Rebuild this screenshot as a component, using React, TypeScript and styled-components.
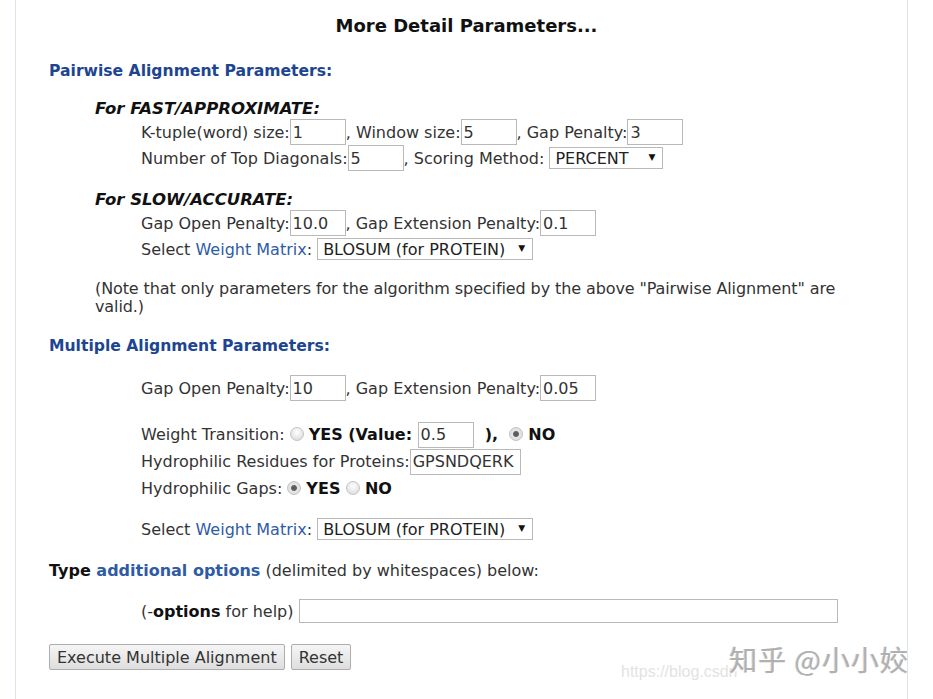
import React from "react";
import styled, { createGlobalStyle } from "styled-components";

const GlobalStyle = createGlobalStyle`
  html, body {
    margin: 0;
    padding: 0;
    background: #ffffff;
  }
  body {
    font-family: "DejaVu Sans", Verdana, sans-serif;
    font-size: 16px;
    color: #333333;
  }
`;

const Frame = styled.div`
  position: relative;
  box-sizing: border-box;
  margin-left: 15px;
  width: 893px;
  height: 699px;
  border-left: 1px solid #dde4ec;
  border-right: 1px solid #dde4ec;
  padding-top: 15px;
  overflow: hidden;
`;

const Title = styled.h2`
  margin: 0;
  font-size: 18px;
  line-height: 22px;
  font-weight: bold;
  text-align: center;
  color: #111111;
  padding-left: 10px;
`;

const SectionHead = styled.div<{ $top: number }>`
  margin-top: ${(p) => p.$top}px;
  padding-left: 33px;
  font-size: 15.6px;
  line-height: 22px;
  font-weight: bold;
  color: #1d4591;
`;

const SubHead = styled.div<{ $top: number }>`
  margin-top: ${(p) => p.$top}px;
  padding-left: 79px;
  font-size: 16.5px;
  line-height: 21px;
  font-weight: bold;
  font-style: italic;
  color: #111111;
`;

const Row = styled.div<{ $top?: number; $h?: number; $indent?: number }>`
  display: flex;
  align-items: center;
  height: ${(p) => p.$h ?? 26}px;
  margin-top: ${(p) => p.$top ?? 0}px;
  padding-left: ${(p) => p.$indent ?? 125}px;
  white-space: pre;
`;

const Note = styled.p`
  margin: 18px 0 0;
  padding-left: 79px;
  padding-right: 50px;
  line-height: 18px;
  letter-spacing: -0.1px;
`;

const Link = styled.span`
  color: #2f5ba6;
`;

const Strong = styled.b`
  color: #111111;
`;

const TextBox = styled.input<{ $w?: number }>`
  box-sizing: border-box;
  width: ${(p) => p.$w ?? 56}px;
  height: 26px;
  margin: 0;
  padding: 0 2px;
  border: 1px solid #b9b9b9;
  font-family: inherit;
  font-size: 16px;
  color: #333333;
  background: #ffffff;
  outline: none;
`;

const SelectWrap = styled.label<{ $w: number }>`
  position: relative;
  display: inline-block;
  width: ${(p) => p.$w}px;
  height: 22px;

  &::after {
    content: "▼";
    position: absolute;
    right: 8px;
    top: 5px;
    font-size: 9px;
    color: #111111;
    pointer-events: none;
  }
`;

const Select = styled.select`
  box-sizing: border-box;
  width: 100%;
  height: 22px;
  margin: 0;
  padding: 0 0 0 5px;
  border: 1px solid #b9b9b9;
  background: #ffffff;
  appearance: none;
  font-family: inherit;
  font-size: 16px;
  color: #222222;
  outline: none;
`;

const Radio = styled.input`
  appearance: none;
  box-sizing: border-box;
  width: 14px;
  height: 14px;
  margin: 0 5px 2px 0;
  border-radius: 50%;
  border: 1px solid #c4c4c4;
  background: radial-gradient(circle at 50% 35%, #ffffff 0%, #e2e2e2 70%, #d2d2d2 100%);

  &:checked {
    background: radial-gradient(circle, #555555 0, #666666 2.5px, #e6e6e6 3.5px, #d4d4d4 100%);
  }
`;

const Bold = styled.b`
  color: #111111;
`;

const ButtonRow = styled.div`
  display: flex;
  gap: 6px;
  margin-top: 20px;
  padding-left: 33px;
`;

const Button = styled.button`
  height: 26px;
  padding: 0 7px;
  border: 1px solid #adadad;
  border-radius: 2px;
  background: linear-gradient(#f5f5f5, #dedede);
  font-family: inherit;
  font-size: 16px;
  color: #333333;
`;

const Watermark = styled.div`
  position: absolute;
  right: -2px;
  bottom: 20px;
  font-family: "Noto Sans CJK SC", sans-serif;
  font-size: 28px;
  color: #b0b0b0;
  text-shadow: 1px 1px 0 #ffffff, -1px 0 0 #d8d8d8;
  letter-spacing: 1px;
`;

const WatermarkUrl = styled.div`
  position: absolute;
  left: 605px;
  bottom: 18px;
  font-family: "Liberation Sans", Arial, sans-serif;
  font-size: 16px;
  color: #e3e3e3;
  white-space: nowrap;
`;

const weightOptions = ["BLOSUM (for PROTEIN)", "PAM (for PROTEIN)", "GONNET (for PROTEIN)"];

export default function App() {
  return (
    <>
      <GlobalStyle />
      <Frame>
        <Title>More Detail Parameters...</Title>

        <SectionHead $top={23}>Pairwise Alignment Parameters:</SectionHead>

        <SubHead $top={16}>For FAST/APPROXIMATE:</SubHead>
        <Row>
          K-tuple(word) size:<TextBox defaultValue="1" />, Window size:<TextBox defaultValue="5" />, Gap Penalty:<TextBox defaultValue="3" />
        </Row>
        <Row>
          Number of Top Diagonals:<TextBox defaultValue="5" />, Scoring Method:{" "}
          <SelectWrap $w={114}>
            <Select defaultValue="PERCENT">
              <option>PERCENT</option>
              <option>ABSOLUTE</option>
            </Select>
          </SelectWrap>
        </Row>

        <SubHead $top={18}>For SLOW/ACCURATE:</SubHead>
        <Row>
          Gap Open Penalty:<TextBox defaultValue="10.0" />, Gap Extension Penalty:<TextBox defaultValue="0.1" />
        </Row>
        <Row>
          Select <Link>Weight Matrix</Link>:{" "}
          <SelectWrap $w={216}>
            <Select>
              {weightOptions.map((o) => (
                <option key={o}>{o}</option>
              ))}
            </Select>
          </SelectWrap>
        </Row>

        <Note>
          (Note that only parameters for the algorithm specified by the above "Pairwise Alignment" are valid.)
        </Note>

        <SectionHead $top={19}>Multiple Alignment Parameters:</SectionHead>

        <Row $top={18}>
          Gap Open Penalty:<TextBox defaultValue="10" />, Gap Extension Penalty:<TextBox defaultValue="0.05" />
        </Row>

        <Row $top={20} $h={27}>
          Weight Transition: <Radio type="radio" name="wt" />
          <Bold>YES (Value: </Bold>
          <TextBox defaultValue="0.5" />
          <Bold>  ),  </Bold>
          <Radio type="radio" name="wt" defaultChecked />
          <Bold>NO</Bold>
        </Row>
        <Row $h={27}>
          Hydrophilic Residues for Proteins:<TextBox $w={111} defaultValue="GPSNDQERK" />
        </Row>
        <Row $h={27}>
          Hydrophilic Gaps: <Radio type="radio" name="hg" defaultChecked />
          <Bold>YES </Bold>
          <Radio type="radio" name="hg" />
          <Bold>NO</Bold>
        </Row>

        <Row $top={14}>
          Select <Link>Weight Matrix</Link>:{" "}
          <SelectWrap $w={216}>
            <Select>
              {weightOptions.map((o) => (
                <option key={o}>{o}</option>
              ))}
            </Select>
          </SelectWrap>
        </Row>

        <Row $top={17} $h={22} $indent={33}>
          <Strong>Type </Strong>
          <Link as="b">additional options</Link> (delimited by whitespaces) below:
        </Row>

        <Row $top={17}>
          (-<Strong>options</Strong> for help) <TextBox $w={539} style={{ height: 24 }} />
        </Row>

        <ButtonRow>
          <Button>Execute Multiple Alignment</Button>
          <Button>Reset</Button>
        </ButtonRow>

        <WatermarkUrl>https://blog.csdn</WatermarkUrl>
        <Watermark>知乎 @小小姣</Watermark>
      </Frame>
    </>
  );
}
